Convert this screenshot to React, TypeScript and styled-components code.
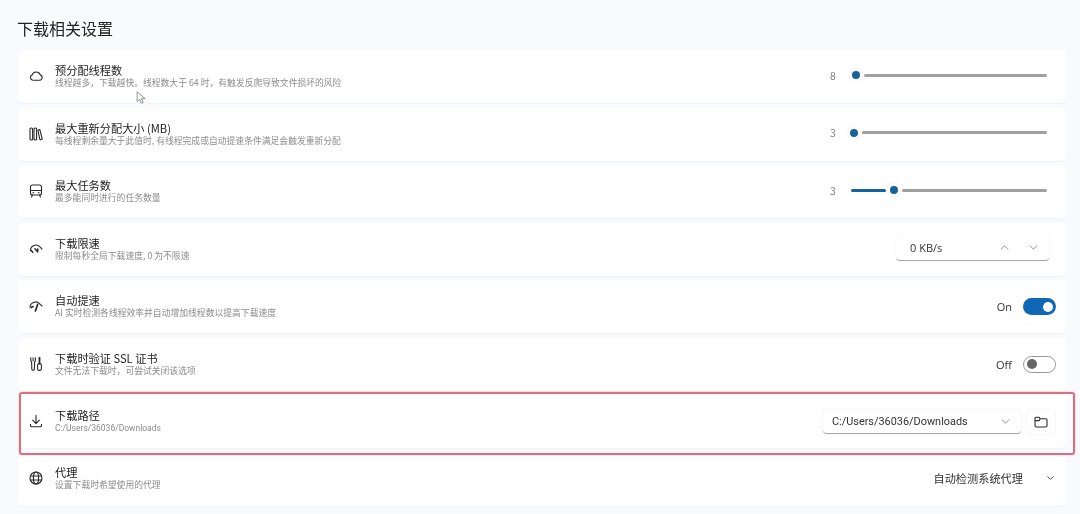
import * as React from 'react'
import styled, { createGlobalStyle } from 'styled-components'

const GlobalStyle = createGlobalStyle`
	html, body {
		margin: 0;
		height: 514px;
		overflow: hidden;
		background: #f8fafd;
	}
	body {
		font-family: "Noto Sans CJK SC", "Liberation Sans", sans-serif;
		color: #1c1c1c;
	}
`

const CloudIcon = () => (
	<Svg viewBox="0 0 14 14">
		<path d="M4 11.2h6.6a2.7 2.7 0 0 0 .6-5.3A4.2 4.2 0 0 0 7 3a4.3 4.3 0 0 0-3.9 3A2.7 2.7 0 0 0 4 11.2z" />
	</Svg>
)
const BarsIcon = () => (
	<Svg viewBox="0 0 14 14">
		<rect x="1" y="1" width="2.6" height="12" rx="1" />
		<rect x="5" y="1" width="2.6" height="12" rx="1" />
		<path d="M9.2 3l1.6-.5 2.5 9.6-1.8.7a.6.6 0 0 1-.7-.4L9 3.700a.6.6 0 0 1 .2-.7z" />
	</Svg>
)
const TrainIcon = () => (
	<Svg viewBox="0 0 14 14">
		<rect x="1.500" y="1" width="11" height="10" rx="2" />
		<path d="M1.500 6.500h11M3.500 11l-1 2M10.500 11l1 2M3.800 8.800h1M9.200 8.800h1" />
	</Svg>
)
const SpeedOffIcon = () => (
	<Svg viewBox="0 0 14 14">
		<path d="M1.400 8.400a5.600 5.600 0 0 1 9.600-3.600l2 2.400" />
		<path d="M1.800 8.200l2 2M6 6.800l2.600 3 .2-2.800" strokeWidth="1.600" />
	</Svg>
)
const SpeedUpIcon = () => (
	<Svg viewBox="0 0 14 14">
		<path d="M1 8.200a5.600 5.600 0 0 1 10.200-2.800l1.800 1.600" />
		<path d="M8.600 5.400L6.400 12M2.200 8.600l1.800-1" strokeWidth="1.700" />
	</Svg>
)
const ToolsIcon = () => (
	<Svg viewBox="0 0 14 14">
		<path d="M1.800.8v2.800a1 1 0 0 0 .8 1l.2 7.400a1.300 1.300 0 0 0 2.600 0l.2-7.400a1 1 0 0 0 .8-1V.8M4.100.8v3" />
		<rect x="8.600" y="6.600" width="3.800" height="6.800" rx="1.700" />
		<path d="M10.500.8v5.800" strokeWidth="1.800" />
	</Svg>
)
const DownloadIcon = () => (
	<Svg viewBox="0 0 14 14">
		<path d="M7 1.200v8.200M3.600 6.200L7 9.600l3.400-3.400M1.500 10.200v1.200a1.300 1.300 0 0 0 1.300 1.300h8.400a1.300 1.300 0 0 0 1.300-1.300v-1.200" />
	</Svg>
)
const GlobeIcon = () => (
	<Svg viewBox="0 0 14 14">
		<circle cx="7" cy="7" r="6" />
		<ellipse cx="7" cy="7" rx="2.600" ry="6" />
		<path d="M1.400 5h11.200M1.400 9h11.200" />
	</Svg>
)
const FolderIcon = () => (
	<Svg viewBox="0 0 14 14">
		<path d="M1 3.400A1.200 1.200 0 0 1 2.200 2.200h2.600l1.400 1.500h5.600A1.200 1.200 0 0 1 13 4.900v5.900a1.200 1.200 0 0 1-1.200 1.200H2.200A1.200 1.200 0 0 1 1 10.800zM1 5.600h4l1.200-1.900" />
	</Svg>
)
const Chevron = ({ up, dark }: { up?: boolean; dark?: boolean }) => (
	<ChevronSvg viewBox="0 0 10 6" $dark={dark}>
		<path d={up ? 'M1 5l4-4 4 4' : 'M1 1l4 4 4-4'} />
	</ChevronSvg>
)

interface ISliderProps {
	value: string
	thumb: number
	filled?: boolean
}

const Slider: React.FC<ISliderProps> = ({ value, thumb, filled }) => (
	<SliderRow>
		<SliderValue>{value}</SliderValue>
		<SliderBox>
			{filled && <SliderFill style={{ width: thumb - 8 }} />}
			<SliderTrack style={{ left: thumb + 8 }} />
			<SliderThumb style={{ left: thumb - 7 }} />
		</SliderBox>
	</SliderRow>
)

interface IRowProps {
	icon: React.ReactNode
	title: string
	desc: string
	right: number
	children: React.ReactNode
	highlight?: boolean
}

const Row: React.FC<IRowProps> = ({ icon, title, desc, right, children, highlight }) => (
	<Card $right={right}>
		<IconBox>{icon}</IconBox>
		<Texts>
			<Title>{title}</Title>
			<Desc $path={highlight}>{desc}</Desc>
		</Texts>
		{children}
		{highlight && <Highlight />}
	</Card>
)

export default function App() {
	return (
		<Page>
			<GlobalStyle />
			<Heading>下载相关设置</Heading>
			<List>
				<Row icon={<CloudIcon />} title="预分配线程数" desc="线程越多，下载越快。线程数大于 64 时，有触发反爬导致文件损坏的风险" right={19}>
					<Slider value="8" thumb={5} />
				</Row>
				<Row icon={<BarsIcon />} title="最大重新分配大小 (MB)" desc="每线程剩余量大于此值时, 有线程完成或自动提速条件满足会触发重新分配" right={19}>
					<Slider value="3" thumb={3} />
				</Row>
				<Row icon={<TrainIcon />} title="最大任务数" desc="最多能同时进行的任务数量" right={19}>
					<Slider value="3" thumb={43} filled />
				</Row>
				<Row icon={<SpeedOffIcon />} title="下载限速" desc="限制每秒全局下载速度, 0 为不限速" right={17}>
					<SpinBox>
						<SpinText>0 KB/s</SpinText>
						<Chevron up />
						<Chevron />
					</SpinBox>
				</Row>
				<Row icon={<SpeedUpIcon />} title="自动提速" desc="AI 实时检测各线程效率并自动增加线程数以提高下载速度" right={10}>
					<SwitchLabel>On</SwitchLabel>
					<Switch $on>
						<Knob $on />
					</Switch>
				</Row>
				<Row icon={<ToolsIcon />} title="下载时验证 SSL 证书" desc="文件无法下载时，可尝试关闭该选项" right={10}>
					<SwitchLabel>Off</SwitchLabel>
					<Switch>
						<Knob />
					</Switch>
				</Row>
				<Row icon={<DownloadIcon />} title="下载路径" desc="C:/Users/36036/Downloads" right={11} highlight>
					<Combo>
						<ComboText>C:/Users/36036/Downloads</ComboText>
						<Chevron />
					</Combo>
					<FolderButton>
						<FolderIcon />
					</FolderButton>
				</Row>
				<Row icon={<GlobeIcon />} title="代理" desc="设置下载时希望使用的代理" right={12}>
					<ProxyText>自动检测系统代理</ProxyText>
					<Chevron dark />
				</Row>
			</List>
			<Cursor viewBox="0 0 12 16">
				<path d="M1 1v11l3-2.600 2 4.600 2-.9-2-4.400h4z" />
			</Cursor>
		</Page>
	)
}

const Page = styled.div`
	position: relative;
	width: 1080px;
	height: 514px;
	padding: 0 14px 0 18px;
	box-sizing: border-box;
	filter: blur(0.35px);
`
const Heading = styled.h1`
	margin: 0 0 0 -1px;
	height: 50px;
	font-size: 16px;
	font-weight: 400;
	line-height: 57px;
	color: #222;
`
const List = styled.div`
	display: grid;
	grid-auto-rows: 53px;
	row-gap: 4.5px;
`
const Card = styled.div<{ $right: number }>`
	position: relative;
	display: flex;
	align-items: center;
	padding: 0 ${(p) => p.$right}px 0 11px;
	background: #fff;
	border-radius: 5px;
	box-shadow: 0 1px 1px rgba(30, 50, 80, 0.04);

	&:last-child {
		padding-bottom: 2px;
	}
`
const IconBox = styled.div`
	display: flex;
	width: 14px;
	margin-right: 12px;
	margin-top: -1px;
`
const Svg = styled.svg`
	width: 14px;
	height: 14px;
	flex: none;
	fill: none;
	stroke: #2a2a2a;
	stroke-width: 1.1;
	stroke-linecap: round;
	stroke-linejoin: round;
`
const ChevronSvg = styled.svg<{ $dark?: boolean }>`
	width: ${(p) => (p.$dark ? 7 : 9)}px;
	height: ${(p) => (p.$dark ? 4 : 5)}px;
	flex: none;
	fill: none;
	stroke: ${(p) => (p.$dark ? '#444' : '#777')};
	stroke-width: ${(p) => (p.$dark ? 1.4 : 1)};
	stroke-linecap: round;
	stroke-linejoin: round;
`
const Texts = styled.div`
	flex: 1;
	display: flex;
	flex-direction: column;
	margin-top: -1px;
`
const Title = styled.div`
	font-size: 11.2px;
	line-height: 14px;
	color: #1c1c1c;
`
const Desc = styled.div<{ $path?: boolean }>`
	font-size: ${(p) => (p.$path ? 8.5 : 8.8)}px;
	line-height: 12px;
	color: #8c8c8c;
	font-family: ${(p) => (p.$path ? 'Roboto, sans-serif' : 'inherit')};
`
const Highlight = styled.div`
	position: absolute;
	z-index: 1;
	top: -3px;
	bottom: -7px;
	left: 1px;
	right: -9px;
	border: 2px solid #d9707f;
	border-radius: 3px;
	box-shadow: 0 0 2px rgba(217, 112, 127, 0.5);
	pointer-events: none;
`
const SliderRow = styled.div`
	display: flex;
	align-items: center;
	margin-top: -3px;
`
const SliderValue = styled.span`
	width: 21px;
	font-size: 10.5px;
	color: #808080;
`
const SliderBox = styled.div`
	position: relative;
	width: 196px;
	height: 14px;
`
const SliderTrack = styled.div`
	position: absolute;
	top: 5.5px;
	right: 0;
	height: 3px;
	border-radius: 2px;
	background: #a0a0a0;
`
const SliderFill = styled.div`
	position: absolute;
	top: 5.5px;
	left: 0;
	height: 3px;
	border-radius: 2px;
	background: #16639c;
`
const SliderThumb = styled.div`
	position: absolute;
	top: 0;
	width: 14px;
	height: 14px;
	box-sizing: border-box;
	border: 3px solid #fff;
	border-radius: 50%;
	background: #16639c;
	box-shadow: 0 0 1px rgba(0, 0, 0, 0.12);
`
const SpinBox = styled.div`
	display: flex;
	align-items: center;
	width: 153px;
	height: 26px;
	padding: 0 11px 0 14px;
	box-sizing: border-box;
	background: #fff;
	border-radius: 4px;
	border-bottom: 1px solid #a8a8a8;
	box-shadow: 0 0 2px rgba(0, 0, 0, 0.1);
	margin-top: -3px;

	svg + svg {
		margin-left: 20px;
	}
`
const SpinText = styled.span`
	flex: 1;
	font-size: 11px;
	color: #333;
	font-family: "Open Sans", "Noto Sans", sans-serif;
`
const SwitchLabel = styled.span`
	margin-right: 11px;
	font-size: 11px;
	color: #333;
	font-family: "Open Sans", "Noto Sans", sans-serif;
`
const Switch = styled.div<{ $on?: boolean }>`
	display: flex;
	align-items: center;
	justify-content: ${(p) => (p.$on ? 'flex-end' : 'flex-start')};
	width: 33px;
	height: 17px;
	padding: 0 3px;
	box-sizing: border-box;
	border-radius: 9px;
	background: ${(p) => (p.$on ? '#0f68b5' : '#fff')};
	border: ${(p) => (p.$on ? 'none' : '1px solid #999')};
`
const Knob = styled.div<{ $on?: boolean }>`
	width: 10px;
	height: 10px;
	border-radius: 50%;
	background: ${(p) => (p.$on ? '#fff' : '#666')};
`
const Combo = styled.div`
	display: flex;
	align-items: center;
	width: 198px;
	height: 24px;
	padding: 0 11px 0 9px;
	box-sizing: border-box;
	background: #fff;
	border-radius: 4px;
	border-bottom: 1px solid #aaa;
	box-shadow: 0 0 2px rgba(0, 0, 0, 0.12);
`
const ComboText = styled.span`
	flex: 1;
	font-size: 10.9px;
	color: #333;
	font-family: Roboto, "Noto Sans", sans-serif;
`
const FolderButton = styled.div`
	display: flex;
	align-items: center;
	justify-content: center;
	width: 28px;
	height: 24px;
	margin-left: 6px;
	background: #fff;
	border-radius: 4px;
	box-shadow: 0 0 2px rgba(0, 0, 0, 0.12);
`
const ProxyText = styled.span`
	margin-right: 24px;
	font-size: 11.2px;
	color: #333;
`
const Cursor = styled.svg`
	position: absolute;
	left: 136px;
	top: 91px;
	width: 11px;
	height: 14px;
	fill: #fff;
	stroke: #777;
	stroke-width: 0.9;
`
